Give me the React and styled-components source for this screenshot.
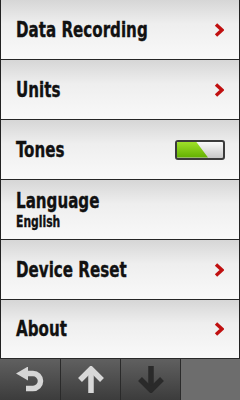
import React from 'react';
import styled, { createGlobalStyle } from 'styled-components';

const GlobalStyle = createGlobalStyle`
  html, body {
    margin: 0;
    padding: 0;
    background: #1e1e1e;
  }
`;

const Screen = styled.div`
  width: 240px;
  height: 400px;
  display: flex;
  flex-direction: column;
  overflow: hidden;
  font-family: "DejaVu Sans Condensed", "DejaVu Sans", sans-serif;
`;

const List = styled.div`
  flex: 1;
  display: flex;
  flex-direction: column;
  border: 1px solid #222;
  border-top: none;
  border-bottom: none;
  background: #262626;
  gap: 1px;
`;

const Row = styled.div`
  height: ${p => p.$h || 59}px;
  flex: none;
  box-sizing: border-box;
  display: flex;
  align-items: center;
  justify-content: space-between;
  padding: 0 15px;
  background: linear-gradient(#d6d6d6, #eeeeee 40%, #f9f9f9);
`;

const Texts = styled.div`
  display: flex;
  flex-direction: column;
  transform: scaleX(0.8);
  transform-origin: left center;
  color: #111;
  -webkit-text-stroke: 0.35px #111;
`;

const Label = styled.div`
  font-size: 21px;
  font-weight: bold;
  line-height: 24px;
  white-space: nowrap;
`;

const Sub = styled.div`
  font-size: 15px;
  font-weight: bold;
  line-height: 18px;
  white-space: nowrap;
`;

const Toggle = styled.div`
  width: 50px;
  height: 20px;
  box-sizing: border-box;
  border: 2px solid #3b3b3b;
  border-radius: 3px;
  background: linear-gradient(#fafafa, #c8c8c8);
  position: relative;
  overflow: hidden;
  margin-right: -1px;

  &::before {
    content: "";
    position: absolute;
    inset: 0;
    background: linear-gradient(#9fe02a, #62b000);
    clip-path: polygon(0 0, 19px 0, 31px 100%, 0 100%);
  }
`;

const Toolbar = styled.div`
  height: 41px;
  flex: none;
  display: grid;
  grid-template-columns: repeat(4, 60px);
  border-top: 1px solid #2a2a2a;
`;

const ToolButton = styled.div`
  display: flex;
  align-items: center;
  justify-content: center;
  background: ${p => (p.$blank ? '#6d6d6d' : 'linear-gradient(#606060, #3c3c3c)')};
  border-left: ${p => (p.$first ? 'none' : '1px solid #2a2a2a')};
`;

const Chevron = () => (
  <svg width="10" height="14" viewBox="0 0 10 14">
    <polyline points="2,1.5 8,7 2,12.5" fill="none" stroke="#c01010" strokeWidth="3.4" strokeLinejoin="miter" />
  </svg>
);

const BackIcon = () => (
  <svg width="28" height="26" viewBox="0 0 28 26">
    <polygon points="0,6.5 12,-0.5 12,13.5" fill="#d6d6d6" />
    <path d="M10 6.5 H17 A7.5 7.5 0 0 1 17 21.5 H10" fill="none" stroke="#d6d6d6" strokeWidth="5.5" />
  </svg>
);

const ArrowIcon = ({ down, color }) => (
  <svg width="28" height="27" viewBox="0 0 28 27" style={down ? { transform: 'rotate(180deg)' } : undefined}>
    <line x1="14" y1="4" x2="14" y2="27" stroke={color} strokeWidth="5.5" />
    <polyline points="3,14 14,3 25,14" fill="none" stroke={color} strokeWidth="5.5" />
  </svg>
);

const items = [
  { label: 'Data Recording', right: 'chevron' },
  { label: 'Units', right: 'chevron' },
  { label: 'Tones', right: 'toggle' },
  { label: 'Language', sub: 'English' },
  { label: 'Device Reset', right: 'chevron' },
  { label: 'About', right: 'chevron', h: 58 },
];

const App = () => (
  <>
    <GlobalStyle />
    <Screen>
      <List>
        {items.map(it => (
          <Row key={it.label} $h={it.h}>
            <Texts>
              <Label>{it.label}</Label>
              {it.sub && <Sub>{it.sub}</Sub>}
            </Texts>
            {it.right === 'chevron' && <Chevron />}
            {it.right === 'toggle' && <Toggle />}
          </Row>
        ))}
      </List>
      <Toolbar>
        <ToolButton $first><BackIcon /></ToolButton>
        <ToolButton><ArrowIcon color="#d8d8d8" /></ToolButton>
        <ToolButton><ArrowIcon down color="#2a2a2a" /></ToolButton>
        <ToolButton $blank />
      </Toolbar>
    </Screen>
  </>
);

export default App;
